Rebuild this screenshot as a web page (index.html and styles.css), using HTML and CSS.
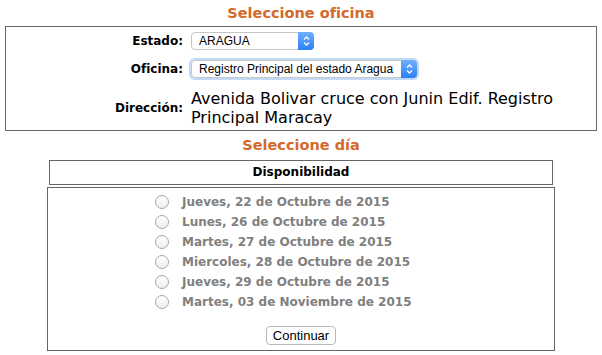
FILE: index.html
```html
<!DOCTYPE html>
<html lang="es">
<head>
  <meta charset="UTF-8" />
  <title>Solicitud de cita</title>
  <link rel="stylesheet" href="styles.css">
</head>
<body>
  <div class="cita-container">

    <h2 class="cita-title">Seleccione oficina</h2>

    <div class="oficina-box">
      <label class="campo-label" for="estado">Estado:</label>
      <div class="select-wrap">
        <select id="estado" class="campo-select select-estado">
          <option>ARAGUA</option>
        </select>
        <span class="select-arrows">
          <svg width="7" height="10" viewBox="0 0 7 10"><path d="M1 3.5 L3.5 1 L6 3.5 M1 6.5 L3.5 9 L6 6.5" fill="none" stroke="#fff" stroke-width="1.3"/></svg>
        </span>
      </div>

      <label class="campo-label" for="oficina">Oficina:</label>
      <div class="select-wrap focus">
        <select id="oficina" class="campo-select select-oficina">
          <option>Registro Principal del estado Aragua</option>
        </select>
        <span class="select-arrows">
          <svg width="7" height="10" viewBox="0 0 7 10"><path d="M1 3.5 L3.5 1 L6 3.5 M1 6.5 L3.5 9 L6 6.5" fill="none" stroke="#fff" stroke-width="1.3"/></svg>
        </span>
      </div>

      <span class="campo-label">Dirección:</span>
      <p class="direccion">Avenida Bolivar cruce con Junin Edif. Registro Principal Maracay</p>
    </div>

    <h2 class="cita-title dia">Seleccione día</h2>

    <div class="disponibilidad">Disponibilidad</div>

    <div class="dias-box">
      <ul class="dias-list">
        <li class="dia-item"><input type="radio" name="dia" disabled><span>Jueves, 22 de Octubre de 2015</span></li>
        <li class="dia-item"><input type="radio" name="dia" disabled><span>Lunes, 26 de Octubre de 2015</span></li>
        <li class="dia-item"><input type="radio" name="dia" disabled><span>Martes, 27 de Octubre de 2015</span></li>
        <li class="dia-item"><input type="radio" name="dia" disabled><span>Miercoles, 28 de Octubre de 2015</span></li>
        <li class="dia-item"><input type="radio" name="dia" disabled><span>Jueves, 29 de Octubre de 2015</span></li>
        <li class="dia-item"><input type="radio" name="dia" disabled><span>Martes, 03 de Noviembre de 2015</span></li>
      </ul>
      <div class="acciones">
        <button class="btn-continuar">Continuar</button>
      </div>
    </div>

  </div>
</body>
</html>
```

FILE: styles.css
```css
body {
  margin: 0;
  font-family: "DejaVu Sans", Verdana, sans-serif;
  background: #fff;
  color: #000;
}
.cita-container {
  padding: 0 5px;
}

.cita-title {
  margin: 0;
  padding: 4px 0;
  font-size: 14.5px;
  line-height: 18px;
  text-align: center;
  color: #d4692b;
}
.cita-title.dia {
  padding: 5px 0 6px;
}

/* Oficina */
.oficina-box {
  display: grid;
  grid-template-columns: 177px 1fr;
  column-gap: 8px;
  row-gap: 10px;
  align-items: center;
  border: 1px solid #666;
  padding: 5px 0 3px;
}
.campo-label {
  text-align: right;
  font-size: 12px;
  font-weight: bold;
}
.select-wrap {
  position: relative;
  justify-self: start;
  height: 18px;
  border-radius: 4px;
}
.select-wrap.focus {
  box-shadow: 0 0 0 2px rgba(120,170,240,0.45);
}
.campo-select {
  -webkit-appearance: none;
  appearance: none;
  display: block;
  height: 18px;
  margin: 0;
  padding: 0 22px 0 7px;
  border: 1px solid #c6c6c6;
  border-radius: 4px;
  background: #fff;
  font-family: "Liberation Sans", Arial, sans-serif;
  font-size: 12px;
  color: #000;
}
.select-estado { width: 123px; }
.select-oficina { width: 226px; }
.select-arrows {
  position: absolute;
  top: 0;
  right: 0;
  width: 16px;
  height: 18px;
  border-radius: 0 4px 4px 0;
  background: linear-gradient(#6fb0ff, #2a80f5);
  display: flex;
  align-items: center;
  justify-content: center;
  pointer-events: none;
}
.direccion {
  margin: 1px 0 0;
  padding-right: 20px;
  font-size: 16px;
  line-height: 19px;
}

/* Dias */
.disponibilidad {
  margin: 0 44px;
  border: 1px solid #666;
  font-size: 12px;
  font-weight: bold;
  line-height: 23px;
  text-align: center;
}
.dias-box {
  margin: 2px 42px 0;
  border: 1px solid #666;
  padding: 4px 0 5px;
}
.dias-list {
  list-style: none;
  margin: 0;
  padding: 0 0 0 107px;
}
.dia-item {
  display: flex;
  align-items: center;
  height: 20px;
  font-size: 12px;
  font-weight: bold;
  color: #808080;
}
.dia-item input {
  -webkit-appearance: none;
  appearance: none;
  width: 14px;
  height: 14px;
  margin: 0 13px 0 0;
  border: 1px solid #a8a8a8;
  border-radius: 50%;
  background: linear-gradient(#fff, #eee);
}
.acciones {
  display: flex;
  justify-content: center;
  margin-top: 14px;
}
.btn-continuar {
  height: 19px;
  padding: 0 6px;
  border: 1px solid #b8b8b8;
  border-radius: 4px;
  background: #fff;
  font-family: "Liberation Sans", Arial, sans-serif;
  font-size: 13px;
  color: #000;
}
```
